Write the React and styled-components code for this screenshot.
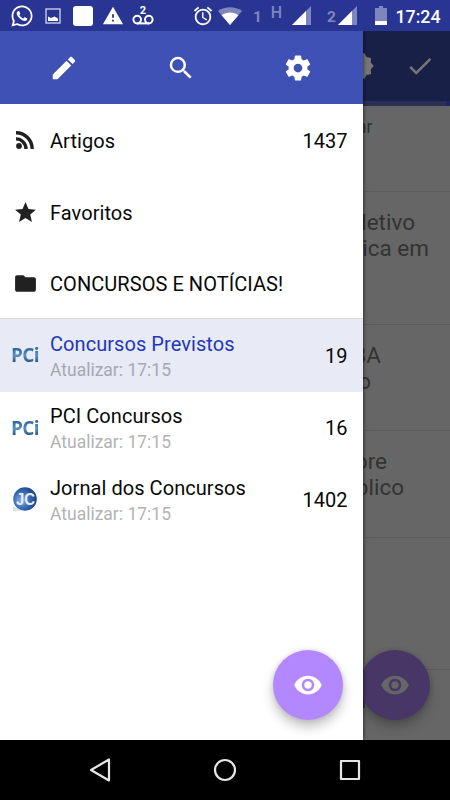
import React from 'react'
import styled, { createGlobalStyle } from 'styled-components'
import { FaWhatsapp } from 'react-icons/fa'
import {
  MdAlarm,
  MdCheck,
  MdFolder,
  MdNewReleases,
  MdSearch,
  MdStar,
  MdVisibility,
  MdWarning,
} from 'react-icons/md'

const GlobalStyle=createGlobalStyle`
  *{
    box-sizing:border-box;
  }
  body{
    margin:0;
    font-family:Roboto, "Noto Sans", sans-serif;
  }
  svg{
    display:block;
    flex-shrink:0;
  }
`
const Screen=styled.div`
  width:450px;
  height:800px;
  display:flex;
  flex-direction:column;
  overflow:hidden;
  background:#000;
`
const StatusBar=styled.div`
  height:31px;
  flex-shrink:0;
  display:flex;
  align-items:center;
  background:#283593;
  color:#fff;
`
const StatusItem=styled.div`
  width:${p=>p.$w}px;
  margin-left:${p=>p.$gap}px;
  flex-shrink:0;
  display:flex;
  justify-content:center;
`
const WhiteBox=styled.div`
  width:20px;
  height:20px;
  border-radius:3px;
  background:#fff;
`
const SimLabel=styled.span`
  font-size:${p=>p.$small?16:15.5}px;
  font-weight:${p=>p.$small?500:700};
  line-height:16px;
  color:#7e86be;
  padding-top:${p=>p.$small?0:3}px;
  padding-bottom:${p=>p.$small?6:0}px;
`
const Clock=styled.span`
  font-size:17.8px;
  font-weight:500;
  line-height:20px;
  padding-top:2px;
`
const Main=styled.div`
  position:relative;
  height:709px;
  flex-shrink:0;
  overflow:hidden;
`
const Page=styled.div`
  height:100%;
  background:#666;
`
const PageBar=styled.div`
  height:70px;
  display:flex;
  align-items:center;
  justify-content:flex-end;
  gap:30px;
  padding-right:15px;
  background:#192048;
  color:#767676;
`
const Progress=styled.div`
  height:5px;
  padding-right:4px;
  background:#1c2560;

  &::before{
    content:"";
    display:block;
    height:5px;
    background:#2a2f55;
  }
`
const Article=styled.div`
  height:${p=>p.$h}px;
  padding-top:${p=>p.$top}px;
  border-bottom:1px solid #5c5c5c;
  color:#333;
`
const Line=styled.div`
  width:${p=>p.$end}px;
  text-align:right;
  white-space:nowrap;
  font-size:${p=>p.$small?17.5:22.5}px;
  line-height:26px;
`
const Drawer=styled.div`
  position:absolute;
  top:0;
  left:0;
  width:362.5px;
  height:100%;
  background:#fff;
  box-shadow:0 0 4px rgba(0,0,0,0.75);
`
const DrawerBar=styled.div`
  height:73px;
  display:flex;
  align-items:center;
  justify-content:center;
  gap:87px;
  background:#3f51b5;
  color:#fff;
`
const Row=styled.div`
  height:${p=>p.$h||72}px;
  display:flex;
  align-items:center;
  padding-top:1px;
  padding-right:15px;
  background:${p=>p.$selected?'#e8eaf6':'#fff'};
  border-bottom:${p=>p.$divider?'1px solid #dcdcdc':'none'};
`
const RowIcon=styled.div`
  width:50px;
  padding-bottom:1px;
  display:flex;
  justify-content:center;
  color:#212121;
`
const RowText=styled.div`
  flex:1;
  padding-top:${p=>p.$selected?3:1}px;
`
const Title=styled.div`
  font-size:20px;
  line-height:25px;
  letter-spacing:0.06px;
  color:${p=>p.$selected?'#2038b8':'#080808'};
`
const Sub=styled.div`
  font-size:17.5px;
  line-height:26px;
  color:${p=>p.$selected?'#a6a8b1':'#b3b3b3'};
`
const Count=styled.div`
  font-size:20px;
  line-height:26px;
  padding-bottom:${p=>p.$feed?1:0}px;
  color:#080808;
`
const PciLogo=styled.span`
  font-family:"Open Sans", sans-serif;
  font-size:19px;
  font-weight:700;
  letter-spacing:-0.6px;
  line-height:26px;
  padding-bottom:1px;
  background:linear-gradient(#2f66a0 25%, #5a92bd 50%, #1a4a78 80%);
  background-clip:text;
  color:transparent;
`
const Fab=styled.div`
  position:absolute;
  left:${p=>p.$x}px;
  top:619px;
  width:70px;
  height:70px;
  border-radius:50%;
  display:flex;
  align-items:center;
  justify-content:center;
  background:${p=>p.$dim?'#483666':'#b388ff'};
  color:${p=>p.$dim?'#666':'#fff'};
  box-shadow:0 7px 12px rgba(0,0,0,0.24), 0 0 5px rgba(0,0,0,0.12);
`
const NavBar=styled.div`
  height:60px;
  flex-shrink:0;
  display:flex;
  align-items:center;
  justify-content:center;
  gap:95px;
  background:#000;
`

const PencilIcon=()=>(
  <svg width="30" height="30" viewBox="0 0 24 24" fill="currentColor">
    <path d="M3 17.25V21h3.75L17.81 9.94l-3.75-3.75L3 17.25zM20.71 7.04c.39-.39.39-1.02 0-1.41l-2.34-2.34c-.39-.39-1.02-.39-1.41 0l-1.83 1.83 3.75 3.75 1.83-1.83z"/>
  </svg>
)
const GearIcon=()=>(
  <svg width="30" height="30" viewBox="0 0 24 24" fill="currentColor">
    <path d="M19.43 12.98c.04-.32.07-.64.07-.98s-.03-.66-.07-.98l2.11-1.65c.19-.15.24-.42.12-.64l-2-3.46c-.12-.22-.39-.3-.61-.22l-2.49 1c-.52-.4-1.08-.73-1.69-.98l-.38-2.65C14.46 2.18 14.25 2 14 2h-4c-.25 0-.46.18-.49.42l-.38 2.65c-.61.25-1.17.59-1.69.98l-2.49-1c-.23-.09-.49 0-.61.22l-2 3.46c-.13.22-.07.49.12.64l2.11 1.65c-.04.32-.07.65-.07.98s.03.66.07.98l-2.11 1.65c-.19.15-.24.42-.12.64l2 3.46c.12.22.39.3.61.22l2.49-1c.52.4 1.08.73 1.69.98l.38 2.65c.03.24.24.42.49.42h4c.25 0 .46-.18.49-.42l.38-2.65c.61-.25 1.17-.59 1.69-.98l2.49 1c.23.09.49 0 .61-.22l2-3.46c.12-.22.07-.49-.12-.64l-2.11-1.65zM12 15.5c-1.93 0-3.5-1.57-3.5-3.5s1.57-3.5 3.5-3.5 3.5 1.57 3.5 3.5-1.57 3.5-3.5 3.5z"/>
  </svg>
)
const FeedIcon=()=>(
  <svg width="18" height="18" viewBox="0 0 18 18" fill="none" stroke="currentColor" strokeWidth="3.4">
    <circle cx="3" cy="15" r="2.900" fill="currentColor" stroke="none"/>
    <path d="M0 7.900a10 10 0 0 1 10 10"/>
    <path d="M0 1.800a16.200 16.200 0 0 1 16.200 16.200"/>
  </svg>
)
const PictureIcon=()=>(
  <svg width="16" height="16" viewBox="0 0 16 16">
    <rect x="1" y="1" width="14" height="14" fill="none" stroke="#c9cde6" strokeWidth="1.4"/>
    <path d="M3 8.5l3 1.5 3.5-1.5L13 10.5V13H3z" fill="#fff"/>
  </svg>
)
const VoicemailIcon=()=>(
  <svg width="22" height="22" viewBox="0 0 22 22" fill="none" stroke="#fff" strokeWidth="2">
    <circle cx="5.200" cy="14.600" r="3.800"/>
    <circle cx="16.800" cy="14.600" r="3.800"/>
    <path d="M5 18.400h12"/>
    <text x="11" y="8.600" textAnchor="middle" fontSize="11" fontWeight="700" fill="#fff" stroke="none">2</text>
  </svg>
)
const WifiIcon=()=>(
  <svg width="24" height="18" viewBox="0 0 24 18">
    <path d="M12 18L0 4C7 -1 17 -1 24 4z" fill="#7e86be"/>
    <path d="M12 18L3.6 8.200C8.5 4.500 15.500 4.500 20.400 8.200z" fill="#fff"/>
  </svg>
)
const SignalIcon=()=>(
  <svg width="19" height="19" viewBox="0 0 19 19">
    <path d="M0 19L19 0V19z" fill="#7e86be"/>
    <path d="M0 19L14 5V19z" fill="#fff"/>
  </svg>
)
const BatteryIcon=()=>(
  <svg width="12" height="19" viewBox="0 0 12 19">
    <path d="M4 0h4v2h4v17H0V2h4z" fill="#7e86be"/>
    <path d="M0 15h12v4H0z" fill="#fff"/>
  </svg>
)
const JcLogo=()=>(
  <svg width="26" height="26" viewBox="0 0 26 26">
    <defs>
      <radialGradient id="jc" cx="0.35" cy="0.55" r="0.65">
        <stop offset="0" stopColor="#8fb4e2"/>
        <stop offset="0.5" stopColor="#3d70b8"/>
        <stop offset="1" stopColor="#1a3f84"/>
      </radialGradient>
    </defs>
    <path d="M1 19v5h8l-3-3z" fill="#dce2ea"/>
    <circle cx="13" cy="12" r="11.800" fill="url(#jc)"/>
    <text x="13.500" y="18" textAnchor="middle" fontFamily="Liberation Sans" fontSize="16" fontWeight="700" fill="#e6eefa" textLength="19" lengthAdjust="spacingAndGlyphs">JC</text>
  </svg>
)

const feeds=[
  {id:1, title:'Concursos Previstos', time:'17:15', count:19, logo:<PciLogo>PCi</PciLogo>, selected:true},
  {id:2, title:'PCI Concursos', time:'17:15', count:16, logo:<PciLogo>PCi</PciLogo>},
  {id:3, title:'Jornal dos Concursos', time:'17:15', count:1402, logo:<JcLogo/>},
]
// end is the x where the line's last letter stops
const articles=[
  {h:86, top:8, small:true, lines:[['ar',372.5]]},
  {h:133, top:17, lines:[['letivo',415],['ica em',429]]},
  {h:106, top:17, lines:[['BA',381],['o',371]]},
  {h:107, top:17, lines:[['pre',387],['blico',404]]},
  {h:132, top:17, lines:[]},
  {h:110, top:17, lines:[['a',366]]},
]

const App = () => {
  return (
    <Screen>
      <GlobalStyle/>
      <StatusBar>
        <StatusItem $w={24} $gap={10}><FaWhatsapp size={24}/></StatusItem>
        <StatusItem $w={16} $gap={11}><PictureIcon/></StatusItem>
        <StatusItem $w={20} $gap={12}><WhiteBox/></StatusItem>
        <StatusItem $w={21} $gap={9}><MdWarning size={22}/></StatusItem>
        <StatusItem $w={22} $gap={9}><VoicemailIcon/></StatusItem>
        <StatusItem $w={22} $gap={38}><MdAlarm size={22}/></StatusItem>
        <StatusItem $w={24} $gap={4}><WifiIcon/></StatusItem>
        <StatusItem $w={9} $gap={11}><SimLabel>1</SimLabel></StatusItem>
        <StatusItem $w={11} $gap={9}><SimLabel $small>H</SimLabel></StatusItem>
        <StatusItem $w={19} $gap={10}><SignalIcon/></StatusItem>
        <StatusItem $w={9} $gap={16}><SimLabel>2</SimLabel></StatusItem>
        <StatusItem $w={19} $gap={2}><SignalIcon/></StatusItem>
        <StatusItem $w={12} $gap={18}><BatteryIcon/></StatusItem>
        <StatusItem $w={46} $gap={8}><Clock>17:24</Clock></StatusItem>
      </StatusBar>
      <Main>
        <Page>
          <PageBar>
            <MdNewReleases size={30}/>
            <MdCheck size={30}/>
          </PageBar>
          <Progress/>
          {articles.map((a,i)=>(
            <Article key={i} $h={a.h} $top={a.top}>
              {a.lines.map(([text,end])=>(
                <Line key={text} $end={end} $small={a.small}>{text}</Line>
              ))}
            </Article>
          ))}
        </Page>
        <Fab $x={360} $dim><MdVisibility size={30}/></Fab>
        <Drawer>
          <DrawerBar>
            <PencilIcon/>
            <MdSearch size={30}/>
            <GearIcon/>
          </DrawerBar>
          <Row>
            <RowIcon><FeedIcon/></RowIcon>
            <RowText><Title>Artigos</Title></RowText>
            <Count>1437</Count>
          </Row>
          <Row>
            <RowIcon><MdStar size={25}/></RowIcon>
            <RowText><Title>Favoritos</Title></RowText>
          </Row>
          <Row $h={71} $divider>
            <RowIcon><MdFolder size={25}/></RowIcon>
            <RowText><Title>CONCURSOS E NOTÍCIAS!</Title></RowText>
          </Row>
          {feeds.map(f=>(
            <Row key={f.id} $h={f.selected?73:72} $selected={f.selected}>
              <RowIcon>{f.logo}</RowIcon>
              <RowText $selected={f.selected}>
                <Title $selected={f.selected}>{f.title}</Title>
                <Sub $selected={f.selected}>Atualizar: {f.time}</Sub>
              </RowText>
              <Count $feed>{f.count}</Count>
            </Row>
          ))}
          <Fab $x={272.5}><MdVisibility size={30}/></Fab>
        </Drawer>
      </Main>
      <NavBar>
        <svg width="30" height="30" viewBox="0 0 30 30" fill="none" stroke="#e6e6e6" strokeWidth="2.200" strokeLinejoin="round">
          <path d="M6 15L24 4.500V25.500z"/>
        </svg>
        <svg width="30" height="30" viewBox="0 0 30 30" fill="none" stroke="#e6e6e6" strokeWidth="2.200">
          <circle cx="15" cy="15" r="10"/>
        </svg>
        <svg width="30" height="30" viewBox="0 0 30 30" fill="none" stroke="#e6e6e6" strokeWidth="2.200" strokeLinejoin="round">
          <rect x="6" y="6" width="18" height="18"/>
        </svg>
      </NavBar>
    </Screen>
  )
}

export default App
